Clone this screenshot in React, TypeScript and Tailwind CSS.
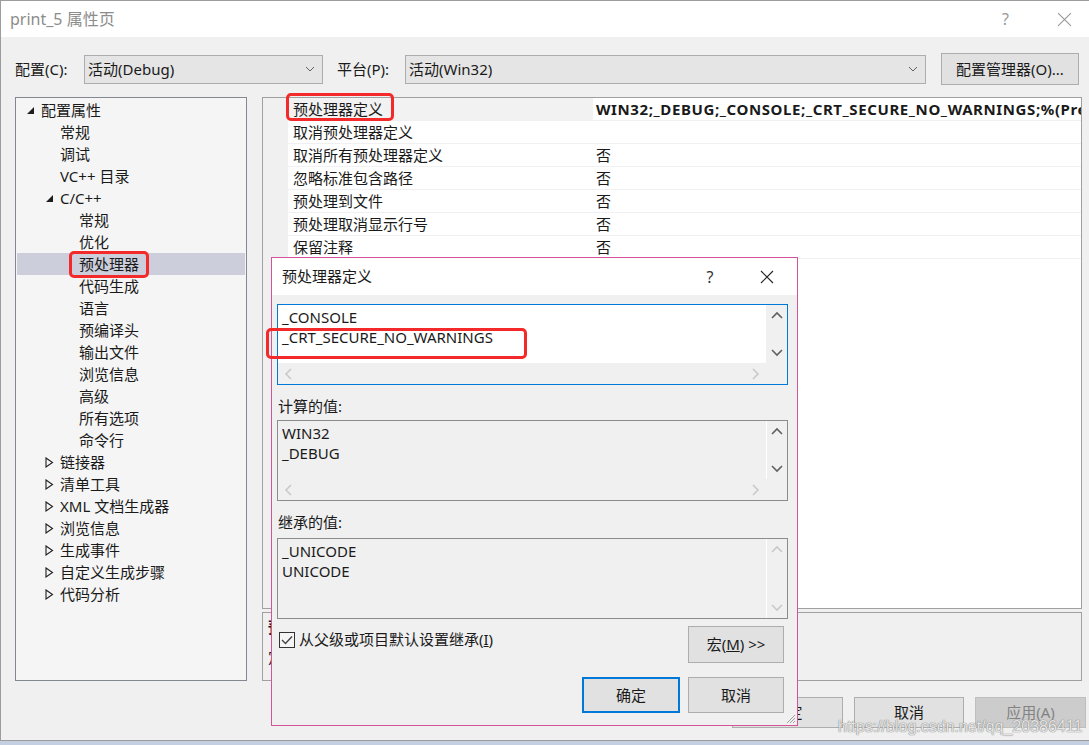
import React from 'react';

const font = "font-['Noto_Sans','Noto_Sans_CJK_SC',sans-serif]";

type TreeItem = { label: string; level: number; arrow?: 'open' | 'closed'; selected?: boolean };

const tree: TreeItem[] = [
  { label: '配置属性', level: 0, arrow: 'open' },
  { label: '常规', level: 1 },
  { label: '调试', level: 1 },
  { label: 'VC++ 目录', level: 1 },
  { label: 'C/C++', level: 1, arrow: 'open' },
  { label: '常规', level: 2 },
  { label: '优化', level: 2 },
  { label: '预处理器', level: 2, selected: true },
  { label: '代码生成', level: 2 },
  { label: '语言', level: 2 },
  { label: '预编译头', level: 2 },
  { label: '输出文件', level: 2 },
  { label: '浏览信息', level: 2 },
  { label: '高级', level: 2 },
  { label: '所有选项', level: 2 },
  { label: '命令行', level: 2 },
  { label: '链接器', level: 1, arrow: 'closed' },
  { label: '清单工具', level: 1, arrow: 'closed' },
  { label: 'XML 文档生成器', level: 1, arrow: 'closed' },
  { label: '浏览信息', level: 1, arrow: 'closed' },
  { label: '生成事件', level: 1, arrow: 'closed' },
  { label: '自定义生成步骤', level: 1, arrow: 'closed' },
  { label: '代码分析', level: 1, arrow: 'closed' },
];

const props: [string, string][] = [
  ['预处理器定义', 'WIN32;_DEBUG;_CONSOLE;_CRT_SECURE_NO_WARNINGS;%(PreprocessorDefinitions)'],
  ['取消预处理器定义', ''],
  ['取消所有预处理器定义', '否'],
  ['忽略标准包含路径', '否'],
  ['预处理到文件', '否'],
  ['预处理取消显示行号', '否'],
  ['保留注释', '否'],
];

const indent = ['pl-[24px]', 'pl-[43px]', 'pl-[62px]'];

function Arrow({ kind }: { kind: 'open' | 'closed' }) {
  if (kind === 'open') {
    return (
      <svg width="9" height="9" viewBox="0 0 9 9" className="absolute -left-[15px] top-[6px]">
        <polygon points="8,1 8,8 1,8" fill="#1e1e1e" />
      </svg>
    );
  }
  return (
    <svg width="9" height="11" viewBox="0 0 9 11" className="absolute -left-[15px] top-[5px]">
      <polygon points="1,1 7.5,5.5 1,10" fill="none" stroke="#1e1e1e" strokeWidth="1.1" />
    </svg>
  );
}

function Chevron({ dir, color }: { dir: 'up' | 'down' | 'left' | 'right'; color: string }) {
  const pts = {
    up: '1,7 6,2 11,7',
    down: '1,2 6,7 11,2',
    left: '7,1 2,6 7,11',
    right: '2,1 7,6 2,11',
  }[dir];
  const vert = dir === 'up' || dir === 'down';
  return (
    <svg width={vert ? 12 : 9} height={vert ? 9 : 12} viewBox={vert ? '0 0 12 9' : '0 0 9 12'}>
      <polyline points={pts} fill="none" stroke={color} strokeWidth="1.6" />
    </svg>
  );
}

function CloseX({ color, size }: { color: string; size: number }) {
  return (
    <svg width={size} height={size} viewBox="0 0 14 14">
      <path d="M1 1L13 13M13 1L1 13" stroke={color} strokeWidth="1.1" />
    </svg>
  );
}

function RedBox({ className }: { className: string }) {
  return <div className={`pointer-events-none absolute rounded-[5px] border-[3px] border-[#f42a2a] ${className}`} />;
}

function ListBox({
  lines,
  active,
  hScroll,
  arrowColor,
}: {
  lines: string[];
  active?: boolean;
  hScroll?: boolean;
  arrowColor: string;
}) {
  return (
    <div
      className={`flex h-[81px] w-[511px] flex-col border ${
        active ? 'border-[#0078d7] bg-white' : 'border-[#8c8c8c] bg-[#f0f0f0]'
      }`}
    >
      <div className="flex min-h-0 flex-1">
        <div className="flex-1 pl-[4px] pt-[2px] text-[15px] leading-[20px] text-[#1a1a1a]">
          {lines.map((l) => (
            <div key={l}>{l}</div>
          ))}
        </div>
        <div className={`flex w-[21px] flex-col justify-between bg-[#f0f0f0] ${active ? '' : 'border-l border-white'}`}>
          <div className="flex h-[21px] items-center justify-center">
            <Chevron dir="up" color={arrowColor} />
          </div>
          <div className="flex h-[21px] items-center justify-center">
            <Chevron dir="down" color={arrowColor} />
          </div>
        </div>
      </div>
      {hScroll && (
        <div className="flex h-[21px] bg-[#f0f0f0]">
          <div className="flex flex-1 justify-between">
            <div className="flex w-[21px] items-center justify-center">
              <Chevron dir="left" color="#c9c9c9" />
            </div>
            <div className="flex w-[21px] items-center justify-center">
              <Chevron dir="right" color="#c9c9c9" />
            </div>
          </div>
          <div className="w-[21px]" />
        </div>
      )}
    </div>
  );
}

function Dialog() {
  return (
    <div className="absolute left-[271px] top-[257px] flex h-[469px] w-[527px] flex-col border border-[#d4549c] bg-[#f0f0f0]">
      <div className="flex h-[37px] shrink-0 items-center bg-white pl-[10px] text-[15px] text-[#1a1a1a]">
        <span>预处理器定义</span>
        <span className="ml-auto w-[30px] text-center text-[16px] text-[#333]">?</span>
        <span className="ml-[34px] mr-[22px] flex w-[16px] justify-center">
          <CloseX color="#222" size={14} />
        </span>
      </div>
      <div className="flex flex-1 flex-col px-[5px] pt-[9px] text-[15px] text-[#1a1a1a]">
        <ListBox lines={['_CONSOLE', '_CRT_SECURE_NO_WARNINGS']} active hScroll arrowColor="#606060" />
        <div className="h-[35px] pl-[1px] pt-[11px] leading-[20px]">计算的值:</div>
        <ListBox lines={['WIN32', '_DEBUG']} hScroll arrowColor="#606060" />
        <div className="h-[37px] pl-[1px] pt-[11px] leading-[20px]">继承的值:</div>
        <ListBox lines={['_UNICODE', 'UNICODE']} arrowColor="#c9c9c9" />
        <div className="mt-[7px] flex pr-[8px]">
          <div className="flex items-start pl-[2px] pt-[6px]">
            <div className="flex h-[16px] w-[16px] items-center justify-center border border-[#333] bg-[#f5f5f5]">
              <svg width="12" height="10" viewBox="0 0 12 10">
                <polyline points="1,5 4.5,8.5 11,1.5" fill="none" stroke="#444" strokeWidth="1.4" />
              </svg>
            </div>
            <span className="ml-[4px] -mt-[3px] leading-[20px]">
              从父级或项目默认设置继承(<span className="underline">I</span>)
            </span>
          </div>
          <div className="ml-auto flex h-[37px] w-[96px] items-center justify-center border border-[#adadad] bg-[#e1e1e1]">
            宏(<span className="underline">M</span>)&nbsp;&gt;&gt;
          </div>
        </div>
        <div className="mt-[14px] flex justify-end gap-[8px] pr-[8px]">
          <div className="flex h-[36px] w-[98px] items-center justify-center border-2 border-[#0078d7] bg-[#e1e1e1]">确定</div>
          <div className="flex h-[36px] w-[96px] items-center justify-center border border-[#adadad] bg-[#e1e1e1]">取消</div>
        </div>
      </div>
      <svg width="11" height="11" viewBox="0 0 11 11" className="absolute bottom-[1px] right-[1px]">
        <path d="M10 2L2 10M10 5L5 10M10 8L8 10" stroke="#a0a0a0" strokeWidth="1" />
      </svg>
    </div>
  );
}

export default function App() {
  return (
    <div className={`relative h-[745px] w-[1089px] overflow-hidden bg-[#c4cfe2] ${font}`}>
      <div className="flex h-[741px] flex-col border-b border-l border-t border-[#9c9c9c] bg-[#f0f0f0] text-[15px] text-[#1a1a1a]">
        {/* title bar */}
        <div className="flex h-[36px] shrink-0 items-center bg-white pl-[9px]">
          <span className="text-[16px] text-[#8c8c8c]">print_5 属性页</span>
          <span className="ml-auto text-[16px] text-[#9a9a9a]">?</span>
          <span className="ml-[48px] mr-[17px] flex">
            <CloseX color="#9a9a9a" size={15} />
          </span>
        </div>

        {/* config row */}
        <div className="flex h-[60px] shrink-0 items-center pb-[1px] pl-[14px] pt-[5px]">
          <span className="w-[69px]">配置(C):</span>
          <div className="flex h-[29px] w-[239px] items-center border border-[#adadad] bg-[#e5e5e5] pl-[3px] pr-[7px]">
            <span>活动(Debug)</span>
            <svg width="10" height="6" viewBox="0 0 10 6" className="ml-auto">
              <polyline points="1,1 5,5 9,1" fill="none" stroke="#606060" strokeWidth="1" />
            </svg>
          </div>
          <span className="ml-[14px] w-[68px]">平台(P):</span>
          <div className="flex h-[29px] w-[521px] items-center border border-[#adadad] bg-[#e5e5e5] pl-[3px] pr-[7px]">
            <span>活动(Win32)</span>
            <svg width="10" height="6" viewBox="0 0 10 6" className="ml-auto">
              <polyline points="1,1 5,5 9,1" fill="none" stroke="#606060" strokeWidth="1" />
            </svg>
          </div>
          <div className="ml-[15px] flex h-[32px] w-[138px] items-center justify-center border border-[#adadad] bg-[#e1e1e1]">
            配置管理器(O)...
          </div>
        </div>

        {/* main area */}
        <div className="flex h-[584px] shrink-0 gap-[15px] pl-[14px]">
          <div className="h-full w-[232px] border border-[#828790] bg-[#f5f5f5] px-[1px] pt-[1px]">
            {tree.map((t, i) => (
              <div
                key={i}
                className={`h-[22px] leading-[22px] ${indent[t.level]} ${t.selected ? 'bg-[#cccedb]' : ''}`}
              >
                <span className="relative">
                  {t.arrow && <Arrow kind={t.arrow} />}
                  {t.label}
                </span>
              </div>
            ))}
          </div>

          <div className="flex w-[820px] flex-col gap-[3px]">
            <div className="h-[512px] border border-[#a0a0a0] bg-white">
              <div className="flex h-full">
                <div className="w-[25px] bg-[#f0f0f0]" />
                <div className="flex-1">
                  {props.map(([n, v], i) => (
                    <div key={n} className="flex h-[23px] border-b border-[#f0f0f2] leading-[22px]">
                      <div className={`w-[305px] pl-[5px] ${i === 0 ? 'bg-[#f2f2f2]' : ''}`}>{n}</div>
                      <div
                        className={`w-0 flex-1 overflow-hidden whitespace-nowrap pl-[3px] ${
                          i === 0 ? 'font-bold tracking-[0.6px]' : ''
                        }`}
                      >
                        {v}
                      </div>
                    </div>
                  ))}
                </div>
              </div>
            </div>
            <div className="flex-1 border border-[#a0a0a0] bg-[#f0f0f0] pl-[5px] pt-[3px] leading-[22px]">
              <div className="font-bold">预处理器定义</div>
              <div className="mt-[8px]">定义源文件的预处理符号。</div>
            </div>
          </div>
        </div>

        {/* bottom buttons */}
        <div className="mt-[16px] flex justify-end gap-[11px] pr-[3px]">
          <div className="flex h-[31px] w-[111px] items-center justify-center border border-[#adadad] bg-[#e1e1e1]">确定</div>
          <div className="flex h-[31px] w-[110px] items-center justify-center border border-[#adadad] bg-[#e1e1e1]">取消</div>
          <div className="flex h-[31px] w-[111px] items-center justify-center border border-[#bfbfbf] bg-[#cccccc] text-[#838383]">
            应用(A)
          </div>
        </div>
      </div>

      <Dialog />

      <RedBox className="left-[286px] top-[93px] h-[28px] w-[108px]" />
      <RedBox className="left-[69px] top-[251px] h-[27px] w-[80px]" />
      <RedBox className="left-[266px] top-[328px] h-[31px] w-[261px]" />

      <div className="pointer-events-none absolute left-[838px] top-[715px] font-['Liberation_Sans',sans-serif] text-[16px] text-white/80 [text-shadow:0_0_1px_#7a7a7a,0_0_1px_#7a7a7a]">
        https://blog.csdn.net/qq_20386411
      </div>
    </div>
  );
}
